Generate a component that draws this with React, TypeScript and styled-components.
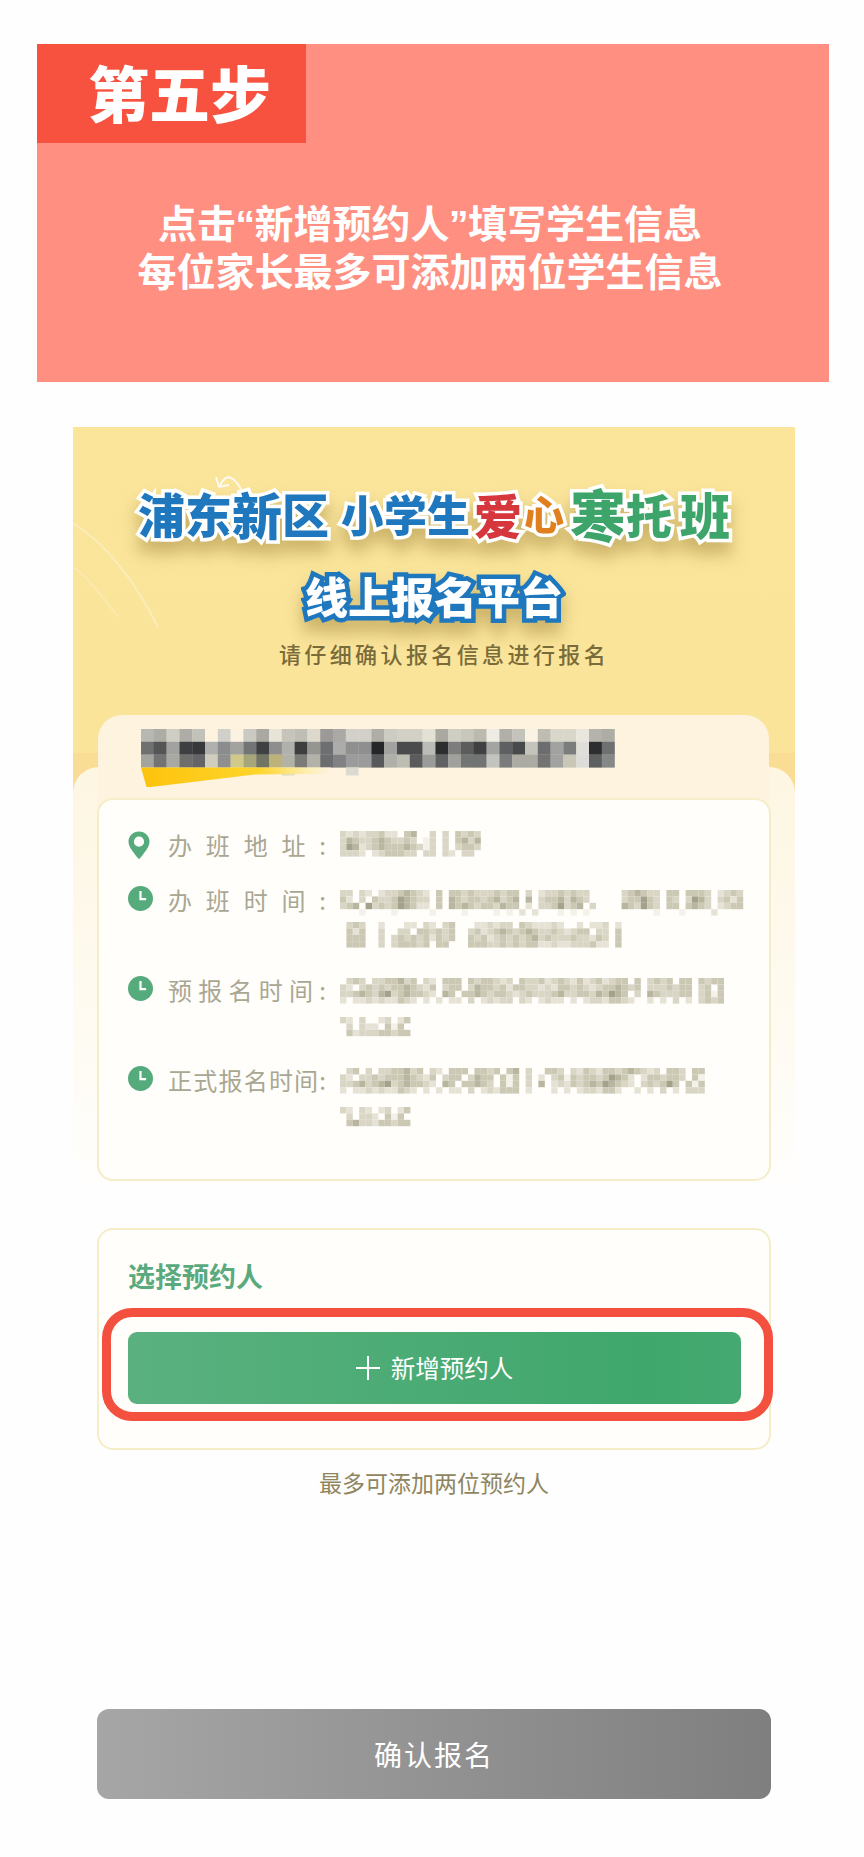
import React from "react";
import styled, { createGlobalStyle } from "styled-components";

const GlobalStyle = createGlobalStyle`
    html, body {
        margin: 0;
        padding: 0;
        background: #fefefe;
    }

    body {
        font-family: "Noto Sans CJK SC", "Noto Sans", sans-serif;
    }
`;

const Page = styled.div`
    width: 864px;
    height: 1857px;
    padding-top: 44px;
    box-sizing: border-box;
    overflow: hidden;
`;

const StepBanner = styled.section`
    width: 792px;
    height: 338px;
    margin-left: 37px;
    background: #ff8f80;
    color: #fff;
`;

const StepTab = styled.div`
    width: 269px;
    height: 99px;
    padding-left: 51px;
    box-sizing: border-box;
    background: #f7523f;
    font-size: 61px;
    font-weight: 900;
    line-height: 95px;
`;

const StepMessage = styled.p`
    margin: 56px 6px 0 0;
    font-size: 39px;
    font-weight: 700;
    line-height: 45px;
    text-align: center;
`;

const Quote = styled.span`
    margin: 0 -0.5px;
    font-family: "Liberation Sans", sans-serif;
`;

const Poster = styled.main`
    position: relative;
    width: 722px;
    height: 1430px;
    margin: 45px 0 0 73px;
    padding: 0 24px;
    box-sizing: border-box;
    background: linear-gradient(
        180deg,
        #fae59b 0,
        #fae49a 326px,
        #f9dd94 326px,
        #f9dd94 390px,
        transparent 390px
    );

    &::before {
        content: "";
        position: absolute;
        top: 340px;
        left: 0;
        right: 0;
        height: 420px;
        border-radius: 26px 26px 0 0;
        background: linear-gradient(180deg, #fdf6e2 0, #fef9ec 170px, #fffefd 100%);
    }

    > * {
        position: relative;
    }
`;

const Streaks = styled.svg`
    position: absolute !important;
    top: 0;
    left: 0;
`;

const LogoRow = styled.div`
    display: flex;
    justify-content: center;
    align-items: center;
    filter: drop-shadow(0 12px 8px rgba(160, 134, 58, 0.5));
`;

const MainLogo = styled(LogoRow)`
    height: 60px;
    padding-top: 56px;
`;

const SubLogo = styled(LogoRow)`
    height: 50px;
    margin-top: 27px;
`;

const LogoChar = styled.span<{ $size: number; $color: string; $gap?: number }>`
    margin-right: ${(p) => p.$gap ?? 0}px;
    font-size: ${(p) => p.$size}px;
    font-weight: 900;
    line-height: 60px;
    color: ${(p) => p.$color};
    -webkit-text-stroke: 7px #fff;
    paint-order: stroke fill;
`;

const SubLogoChar = styled.span`
    font-size: 43px;
    font-weight: 900;
    line-height: 50px;
    color: #fff;
    -webkit-text-stroke: 9px #1f78bd;
    paint-order: stroke fill;
`;

const Tagline = styled.p`
    margin: 17px 0 0 20px;
    font-size: 22px;
    font-weight: 500;
    line-height: 32px;
    letter-spacing: 3.4px;
    text-align: center;
    color: #7a6c3a;
`;

const TitleCard = styled.div`
    width: 671px;
    height: 97px;
    margin: 46px 0 -14px 1px;
    padding: 14px 0 0 43px;
    box-sizing: border-box;
    border-radius: 24px 24px 0 0;
    background: #fdf3df;
`;

const TitleMosaic = styled.svg`
    display: block;
    overflow: visible;
    filter: blur(0.4px);
`;

const TitleUnderline = styled.div`
    width: 190px;
    height: 20px;
    clip-path: polygon(0 0, 100% 0, 100% 32%, 60% 36%, 3% 100%);
    background: linear-gradient(90deg, #fdc30c 0, #fed52c 62%, #fdefb4 88%, #fdf3df 100%);
`;

const InfoCard = styled.div`
    height: 383px;
    padding: 27px 28px 0 29px;
    box-sizing: border-box;
    border: 2px solid #f4edc8;
    border-radius: 16px;
    background: #fffefb;
`;

const InfoRow = styled.div`
    display: grid;
    grid-template-columns: 25px 158px 1fr;
    column-gap: 15px;
    margin-bottom: 20px;
`;

const RowIcon = styled.svg`
    display: block;
    margin-top: 4px;
`;

const RowLabel = styled.div`
    font-size: 24px;
    line-height: 35px;
    color: #a9a792;
    text-align: justify;
    text-align-last: justify;
`;

const RowValue = styled.div`
    margin-left: -1px;
`;

const ValueLine = styled.div<{ $top: number }>`
    height: 35px;
    padding-top: ${(p) => p.$top}px;
    box-sizing: border-box;
`;

const ValueMosaic = styled.svg`
    display: block;
    overflow: visible;
    filter: blur(0.7px);
`;

const PickerCard = styled.div`
    height: 222px;
    margin-top: 47px;
    padding: 31px 28px 0 29px;
    box-sizing: border-box;
    border: 2px solid #f4edc8;
    border-radius: 16px;
    background: #fffefb;
`;

const PickerTitle = styled.h3`
    margin: 0 0 41px;
    font-size: 27px;
    font-weight: 700;
    line-height: 30px;
    color: #5aaa7e;
`;

const AddButton = styled.button`
    position: relative;
    display: flex;
    justify-content: center;
    align-items: center;
    gap: 11px;
    width: 613px;
    height: 72px;
    padding: 0;
    border: 0;
    border-radius: 9px;
    background: linear-gradient(90deg, #5ab17f 0, #3fa76c 85%, #45a971 100%);
    color: #fff;
    font-family: inherit;
    font-size: 24.5px;
    line-height: 72px;

    &::after {
        content: "";
        position: absolute;
        top: -24px;
        bottom: -17px;
        left: -26px;
        right: -32px;
        border: 9px solid #f4503f;
        border-radius: 30px;
    }
`;

const Hint = styled.p`
    margin: 15px 0 0;
    font-size: 23px;
    line-height: 34px;
    text-align: center;
    color: #8f8660;
`;

const ConfirmButton = styled.button`
    display: block;
    width: 674px;
    height: 90px;
    margin-top: 210px;
    padding: 0;
    border: 0;
    border-radius: 12px;
    background: linear-gradient(90deg, #a6a6a6 0, #7f7f7f 100%);
    color: #fff;
    font-family: inherit;
    font-size: 28px;
    letter-spacing: 2px;
`;

const TITLE_ROWS = [
    ["b8b8b2", "adaca5", "cfcec5", "aeaca7", "c3c2ba", "fdf3df", "d0cfca", "fbf2e2", "cac9c2", "a9a8a2", "e8e4d8", "c6c4bb", "bfbeb4", "ddd8cc", "9b9a96", "aba9a5", "d2d0c8", "d2d0c8", "aeaea6", "cdccc3", "d3d1c6", "d3d1c6", "e3e1d3", "aaa9a1", "cfcec3", "c8c7bc", "bcb9ae", "eeece4", "b0afa8", "c4c3bb", "faf2e2", "bfbcb2", "d9d7c9", "d9d7c9", "e9e7dd", "b5b3ab", "aeada5"],
    ["6f7170", "545555", "a2a3a1", "3e3f40", "37383a", "b0b1ae", "8b8c8d", "a2a29e", "737475", "3f4041", "8e8e8e", "b0b0ac", "3d3e3e", "959592", "6e6f70", "acadaa", "8e8f8e", "8e8f8e", "242627", "a2a3a0", "4a4b4c", "4a4b4c", "bbbcb8", "2c2d2e", "7c7d7c", "5c5c5c", "3f4042", "a4a5a2", "5e5f60", "48494b", "c4c4bc", "6c6d6e", "a2a3a0", "7b7c7c", "dfded8", "2d2e30", "6f7070"],
    ["a4a49f", "727372", "a9a9a4", "6e6e6c", "656567", "cfcdbe", "8f8f90", "d1c98a", "a7a57a", "737563", "bdb27a", "b3b2a6", "7b7b78", "b3b2a8", "6c6d6e", "808182", "9a9b9a", "9a9b9a", "58595a", "b0b0aa", "bdbdb2", "5b5b5b", "9b9c99", "606162", "a0a09c", "737474", "727373", "c3c4c0", "7a7b7b", "abaaa3", "abaaa3", "737374", "a2a3a0", "c9c8b8", "dddcd8", "5e5f60", "868787"],
];

const VALUE_SHADES: Record<string, string> = {
    a: "#f3f1e8",
    b: "#e6e3d6",
    c: "#d9d6c6",
    d: "#cbc8b4",
    e: "#b9b69f",
    f: "#a5a28c",
};

const ADDRESS_ROWS = [
    "cbcbccdbb.de..c.c.dcdc",
    "cedccdedccdc.ac.c.dece",
    "cfebcdedddedcac.c.cddc",
    "cccb.bcdddcc.cc.cb.cc.",
];
const CLASS_TIME_ROWS = [
    "cc.cb.bccdedcb.d.ddcdcccdcdd.c.bccdcdcc.....cdedcc.dd.dddc.bcdc",
    "db.c.dccdfedcc.d.edcddcdecde.e.cddecedc.....cddfdc.dc.cfec.cdbd",
    "cde.fcdcdfedbb.d.ededcddcedd.b.ccdfcde.c....edcfdc.dd.dedc.bcdd",
    "...a....a.....a....a....a.a.b.b...a.a.a..........a...a....b....",
];
const CLASS_TIME_ROWS_2 = [
    ".cdc..b...bb.cb.cd...bbcbcc.dcbbbcb..b.bbc.b",
    ".dbd..c..cc.ddcdcd..cdbcdedcdedccdcbcdd.cc.d",
    ".ddd..c.cdcdcdbdcd..dcdbcdcdcdecdcccdccbdc.d",
    ".ddd..c.cdddcd.dd...dddccdcdcddbbcbbcccdbb.d",
];
const PRE_SIGNUP_ROWS = [
    ".cdc.ccddecd.cb.ddd.dcddcbc.dccdbcdcbdbcdbcdd.d.cdcd.dd.dcdd",
    "cb.cdcdcddedcbd.cdd.ceddcdbddccbcbddcdcbcddedcd.cccdcdd.cd.d",
    "ccdedcefcdeddcb.ed.ddedcddcbcdcccdeccddcedfed.c.edcccdd.cdad",
    "b.bbcbcbbdcb.b.b.bb.c.bcbcc.cb.bcbb.b.bccbddcb..b.b.c.b.cdcd",
];
const PRE_SIGNUP_ROWS_2 = [
    "cb.c..bc.bd",
    ".c.cbb.dad.",
    ".dbcccddcdd",
];
const OPEN_SIGNUP_ROWS = [
    ".cd.c.ccddecd.cb.ddd.ddcd.de.c..ddc.cbdcbddcdedcbc.ddc.dd",
    "cb.ccdcdddedcbd.cdd.cedd.dad.c.b.cdadcddcdfedb.bddcddc.da",
    "ccdecdefcdeddcb.ed.ddedc.dad.c.e.bcbdcdedfedcb.cdcdfd.dad",
    "b.bbcbcbbdcb.b.b.bb.c.bcbddd.b...b.b.bccbddb..b.b.c.b.ccc",
];
const OPEN_SIGNUP_ROWS_2 = [
    "cb.cb.bc.bd",
    ".c.ccb.dad.",
    ".deccbddcdd",
];

function TitleBlocks() {
    const cell = 12.8;
    return (
        <TitleMosaic width={cell * 37} height={cell * 3}>
            {TITLE_ROWS.map((row, y) =>
                row.map((color, x) => (
                    <rect
                        key={`${x}-${y}`}
                        x={x * cell}
                        y={y * cell}
                        width={cell + 0.2}
                        height={cell + 0.2}
                        fill={`#${color}`}
                    />
                )),
            )}
            <rect x={cell * 11} y={cell * 3} width={cell} height={8} fill="#dcd8c8" />
            <rect x={cell * 16} y={cell * 3} width={cell} height={8} fill="#dbdad0" />
        </TitleMosaic>
    );
}

function ValueBlocks({ rows }: { rows: string[] }) {
    const cell = 6.4;
    const columns = Math.max(...rows.map((row) => row.length));
    return (
        <ValueMosaic width={columns * cell} height={rows.length * cell}>
            {rows.map((row, y) =>
                row.split("").map((shade, x) =>
                    VALUE_SHADES[shade] ? (
                        <rect
                            key={`${x}-${y}`}
                            x={x * cell}
                            y={y * cell}
                            width={cell}
                            height={cell}
                            fill={VALUE_SHADES[shade]}
                        />
                    ) : null,
                ),
            )}
        </ValueMosaic>
    );
}

function PinIcon() {
    return (
        <RowIcon width="22" height="28" viewBox="0 0 22 28">
            <path
                fillRule="evenodd"
                fill="#56ab7c"
                d="M11 .5C5 .5.5 5 .5 10.6c0 3.4 1.6 6.2 3.7 9.2 2 2.8 4.4 5.8 6.1 7.8.4.4 1 .4 1.4 0 1.7-2 4.1-5 6.1-7.8 2.1-3 3.7-5.8 3.7-9.2C21.5 5 17 .5 11 .5Zm0 5.1a5.1 5.1 0 1 1 0 10.2 5.1 5.1 0 0 1 0-10.2Z"
            />
        </RowIcon>
    );
}

function ClockIcon() {
    return (
        <RowIcon width="25" height="25" viewBox="0 0 25 25">
            <circle cx="12.5" cy="12.5" r="12.5" fill="#56ab7c" />
            <path d="M12.5 5v8.2h5.6" fill="none" stroke="#fff" strokeWidth="2.2" />
        </RowIcon>
    );
}

function PlusMark() {
    return (
        <svg width="24" height="24" viewBox="0 0 24 24">
            <path d="M12 0v24M0 12h24" stroke="#fff" strokeWidth="2" fill="none" />
        </svg>
    );
}

export default function App() {
    return (
        <Page lang="zh-CN">
            <GlobalStyle />
            <StepBanner>
                <StepTab>第五步</StepTab>
                <StepMessage>
                    点击<Quote>“</Quote>新增预约人<Quote>”</Quote>填写学生信息
                    <br />
                    每位家长最多可添加两位学生信息
                </StepMessage>
            </StepBanner>
            <Poster>
                <Streaks width="722" height="340" viewBox="0 0 722 340" fill="none">
                    <path d="M0 96C30 115 60 150 85 200" stroke="#fff" strokeOpacity="0.3" strokeWidth="2" />
                    <path d="M0 140C15 150 30 170 45 190" stroke="#fff" strokeOpacity="0.2" strokeWidth="2" />
                    <path d="M168 62C156 42 150 52 146 60M146 60l-3-10M146 60l10-2" stroke="#fff" strokeOpacity="0.85" strokeWidth="2" />
                </Streaks>
                <MainLogo>
                    <LogoChar $size={47} $color="#1f78bd">浦</LogoChar>
                    <LogoChar $size={47} $color="#1f78bd">东</LogoChar>
                    <LogoChar $size={50} $color="#1f78bd">新</LogoChar>
                    <LogoChar $size={47} $color="#1f78bd" $gap={12}>区</LogoChar>
                    <LogoChar $size={43} $color="#1f78bd">小</LogoChar>
                    <LogoChar $size={43} $color="#1f78bd">学</LogoChar>
                    <LogoChar $size={43} $color="#1f78bd" $gap={4}>生</LogoChar>
                    <LogoChar $size={48} $color="#d5373d" $gap={2}>爱</LogoChar>
                    <LogoChar $size={40} $color="#e07f1e" $gap={6}>心</LogoChar>
                    <LogoChar $size={56} $color="#3ea56a">寒</LogoChar>
                    <LogoChar $size={46} $color="#3ea56a" $gap={8}>托</LogoChar>
                    <LogoChar $size={50} $color="#3ea56a">班</LogoChar>
                </MainLogo>
                <SubLogo>
                    <SubLogoChar>线上报名平台</SubLogoChar>
                </SubLogo>
                <Tagline>请仔细确认报名信息进行报名</Tagline>
                <TitleCard>
                    <TitleBlocks />
                    <TitleUnderline />
                </TitleCard>
                <InfoCard>
                    <InfoRow>
                        <PinIcon />
                        <RowLabel>办班地址:</RowLabel>
                        <RowValue>
                            <ValueLine $top={4}>
                                <ValueBlocks rows={ADDRESS_ROWS} />
                            </ValueLine>
                        </RowValue>
                    </InfoRow>
                    <InfoRow>
                        <ClockIcon />
                        <RowLabel>办班时间:</RowLabel>
                        <RowValue>
                            <ValueLine $top={8}>
                                <ValueBlocks rows={CLASS_TIME_ROWS} />
                            </ValueLine>
                            <ValueLine $top={5}>
                                <ValueBlocks rows={CLASS_TIME_ROWS_2} />
                            </ValueLine>
                        </RowValue>
                    </InfoRow>
                    <InfoRow>
                        <ClockIcon />
                        <RowLabel>预报名时间:</RowLabel>
                        <RowValue>
                            <ValueLine $top={6}>
                                <ValueBlocks rows={PRE_SIGNUP_ROWS} />
                            </ValueLine>
                            <ValueLine $top={10}>
                                <ValueBlocks rows={PRE_SIGNUP_ROWS_2} />
                            </ValueLine>
                        </RowValue>
                    </InfoRow>
                    <InfoRow>
                        <ClockIcon />
                        <RowLabel>正式报名时间:</RowLabel>
                        <RowValue>
                            <ValueLine $top={6}>
                                <ValueBlocks rows={OPEN_SIGNUP_ROWS} />
                            </ValueLine>
                            <ValueLine $top={10}>
                                <ValueBlocks rows={OPEN_SIGNUP_ROWS_2} />
                            </ValueLine>
                        </RowValue>
                    </InfoRow>
                </InfoCard>
                <PickerCard>
                    <PickerTitle>选择预约人</PickerTitle>
                    <AddButton type="button">
                        <PlusMark />
                        新增预约人
                    </AddButton>
                </PickerCard>
                <Hint>最多可添加两位预约人</Hint>
                <ConfirmButton type="button">确认报名</ConfirmButton>
            </Poster>
        </Page>
    );
}
